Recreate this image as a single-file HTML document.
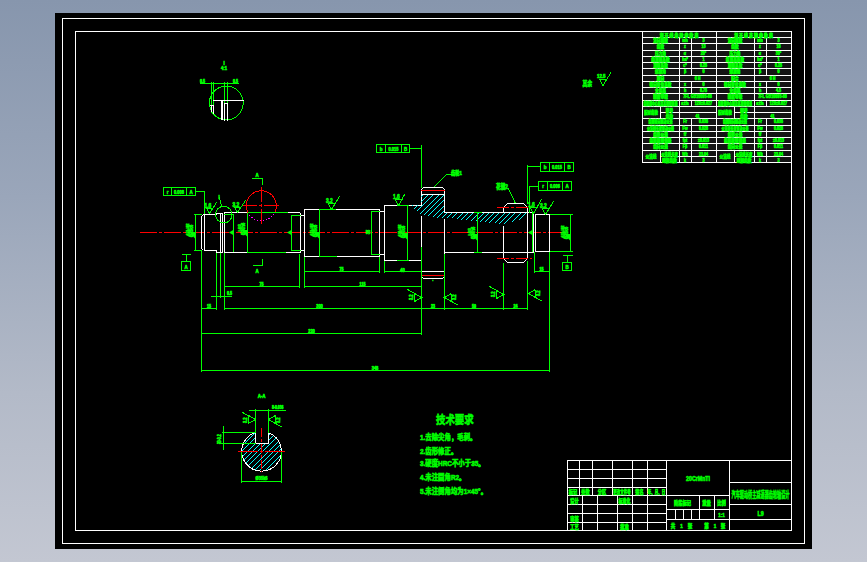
<!DOCTYPE html>
<html lang="zh"><head><meta charset="utf-8"><title>CAD 齿轮轴</title>
<style>
html,body{margin:0;padding:0}
body{width:867px;height:562px;overflow:hidden;background:linear-gradient(180deg,#8796ad 0%,#9aa6ba 35%,#b3bac8 70%,#c3c7d2 100%);}
svg{display:block;position:absolute;left:0;top:0}
svg path,svg rect,svg circle{shape-rendering:crispEdges;stroke-width:1}
svg text{font-family:"Liberation Sans","Noto Sans CJK SC",sans-serif;stroke:#00ff00;stroke-width:.6px;paint-order:stroke}
</style></head><body>
<svg width="867" height="562" viewBox="0 0 867 562" fill="none">
<rect x="55" y="13" width="757" height="536" fill="#000"/>
<rect x="62.5" y="18.5" width="742" height="525" stroke="#ffffff" fill="none"/>
<rect x="75.5" y="31.5" width="716" height="499" stroke="#ffffff" fill="none"/>
<rect x="643" y="32" width="148" height="130" fill="#141414"/>
<path d="M642 31.5H792" stroke="#ffffff"/>
<path d="M642 37.5H792" stroke="#ffffff"/>
<path d="M642 43.5H792" stroke="#ffffff"/>
<path d="M642 50.5H792" stroke="#ffffff"/>
<path d="M642 56.5H792" stroke="#ffffff"/>
<path d="M642 62.5H792" stroke="#ffffff"/>
<path d="M642 68.5H792" stroke="#ffffff"/>
<path d="M642 75.5H792" stroke="#ffffff"/>
<path d="M642 81.5H792" stroke="#ffffff"/>
<path d="M642 87.5H792" stroke="#ffffff"/>
<path d="M642 93.5H792" stroke="#ffffff"/>
<path d="M642 100.5H792" stroke="#ffffff"/>
<path d="M642 106.5H792" stroke="#ffffff"/>
<path d="M642 112.5H792" stroke="#ffffff"/>
<path d="M642 118.5H792" stroke="#ffffff"/>
<path d="M642 125.5H792" stroke="#ffffff"/>
<path d="M642 131.5H792" stroke="#ffffff"/>
<path d="M642 137.5H792" stroke="#ffffff"/>
<path d="M642 143.5H792" stroke="#ffffff"/>
<path d="M642 150.5H792" stroke="#ffffff"/>
<path d="M642 156.5H792" stroke="#ffffff"/>
<path d="M642 162.5H792" stroke="#ffffff"/>
<rect x="643" y="107" width="17" height="11" fill="#141414"/>
<rect x="643" y="151" width="17" height="11" fill="#141414"/>
<path d="M642.5 31V163" stroke="#ffffff"/>
<path d="M679.5 37V163" stroke="#ffffff"/>
<path d="M691.5 37V76" stroke="#ffffff"/>
<path d="M691.5 81V94" stroke="#ffffff"/>
<path d="M691.5 100V107" stroke="#ffffff"/>
<path d="M691.5 118V163" stroke="#ffffff"/>
<path d="M660.5 106V119" stroke="#ffffff"/>
<path d="M660.5 150V163" stroke="#ffffff"/>
<rect x="717" y="107" width="17" height="11" fill="#141414"/>
<rect x="717" y="151" width="17" height="11" fill="#141414"/>
<path d="M716.5 31V163" stroke="#ffffff"/>
<path d="M754.5 37V163" stroke="#ffffff"/>
<path d="M766.5 37V76" stroke="#ffffff"/>
<path d="M766.5 81V94" stroke="#ffffff"/>
<path d="M766.5 100V107" stroke="#ffffff"/>
<path d="M766.5 118V163" stroke="#ffffff"/>
<path d="M734.5 106V119" stroke="#ffffff"/>
<path d="M734.5 150V163" stroke="#ffffff"/>
<path d="M791.5 31V163" stroke="#ffffff"/>
<text transform="translate(679.0 36.6) scale(0.85 1)" font-size="4.6" fill="#00ff00" text-anchor="middle" font-weight="bold">渐 开 线 齿 轮 参 数 表</text>
<text transform="translate(753.5 36.6) scale(0.85 1)" font-size="4.6" fill="#00ff00" text-anchor="middle" font-weight="bold">渐 开 线 花 键 参 数 表</text>
<text transform="translate(660.5 42.1) scale(0.8 1)" font-size="4.6" fill="#00ff00" text-anchor="middle" font-weight="bold">法向模数</text>
<text transform="translate(685.0 42.1) scale(0.8 1)" font-size="4.6" fill="#00ff00" text-anchor="middle" font-weight="bold">mn</text>
<text transform="translate(703.5 42.1) scale(0.8 1)" font-size="4.6" fill="#00ff00" text-anchor="middle" font-weight="bold">3</text>
<text transform="translate(660.5 48.1) scale(0.8 1)" font-size="4.6" fill="#00ff00" text-anchor="middle" font-weight="bold">齿数</text>
<text transform="translate(685.0 48.1) scale(0.8 1)" font-size="4.6" fill="#00ff00" text-anchor="middle" font-weight="bold">z</text>
<text transform="translate(703.5 48.1) scale(0.8 1)" font-size="4.6" fill="#00ff00" text-anchor="middle" font-weight="bold">13</text>
<text transform="translate(660.5 55.1) scale(0.8 1)" font-size="4.6" fill="#00ff00" text-anchor="middle" font-weight="bold">压力角</text>
<text transform="translate(685.0 55.1) scale(0.8 1)" font-size="4.6" fill="#00ff00" text-anchor="middle" font-weight="bold">α</text>
<text transform="translate(703.5 55.1) scale(0.8 1)" font-size="4.6" fill="#00ff00" text-anchor="middle" font-weight="bold">20°</text>
<text transform="translate(660.5 61.1) scale(0.8 1)" font-size="4.6" fill="#00ff00" text-anchor="middle" font-weight="bold">齿顶高系数</text>
<text transform="translate(685.0 61.1) scale(0.8 1)" font-size="4.6" fill="#00ff00" text-anchor="middle" font-weight="bold">ha*</text>
<text transform="translate(703.5 61.1) scale(0.8 1)" font-size="4.6" fill="#00ff00" text-anchor="middle" font-weight="bold">1</text>
<text transform="translate(660.5 67.1) scale(0.8 1)" font-size="4.6" fill="#00ff00" text-anchor="middle" font-weight="bold">顶隙系数</text>
<text transform="translate(685.0 67.1) scale(0.8 1)" font-size="4.6" fill="#00ff00" text-anchor="middle" font-weight="bold">c*</text>
<text transform="translate(703.5 67.1) scale(0.8 1)" font-size="4.6" fill="#00ff00" text-anchor="middle" font-weight="bold">0.25</text>
<text transform="translate(660.5 73.1) scale(0.8 1)" font-size="4.6" fill="#00ff00" text-anchor="middle" font-weight="bold">螺旋角</text>
<text transform="translate(685.0 73.1) scale(0.8 1)" font-size="4.6" fill="#00ff00" text-anchor="middle" font-weight="bold">β</text>
<text transform="translate(703.5 73.1) scale(0.8 1)" font-size="4.6" fill="#00ff00" text-anchor="middle" font-weight="bold">0</text>
<text transform="translate(660.5 80.1) scale(0.8 1)" font-size="4.6" fill="#00ff00" text-anchor="middle" font-weight="bold">旋向</text>
<text transform="translate(697.5 80.1) scale(0.8 1)" font-size="4.6" fill="#00ff00" text-anchor="middle" font-weight="bold">6 H</text>
<text transform="translate(660.5 86.1) scale(0.8 1)" font-size="4.6" fill="#00ff00" text-anchor="middle" font-weight="bold">径向变位系数</text>
<text transform="translate(685.0 86.1) scale(0.8 1)" font-size="4.6" fill="#00ff00" text-anchor="middle" font-weight="bold">x</text>
<text transform="translate(703.5 86.1) scale(0.8 1)" font-size="4.6" fill="#00ff00" text-anchor="middle" font-weight="bold">0</text>
<text transform="translate(660.5 92.1) scale(0.8 1)" font-size="4.6" fill="#00ff00" text-anchor="middle" font-weight="bold">全齿高</text>
<text transform="translate(685.0 92.1) scale(0.8 1)" font-size="4.6" fill="#00ff00" text-anchor="middle" font-weight="bold">h</text>
<text transform="translate(703.5 92.1) scale(0.8 1)" font-size="4.6" fill="#00ff00" text-anchor="middle" font-weight="bold">6.75</text>
<text transform="translate(660.5 98.1) scale(0.8 1)" font-size="4.6" fill="#00ff00" text-anchor="middle" font-weight="bold">精度等级</text>
<text transform="translate(697.5 98.1) scale(0.8 1)" font-size="4.6" fill="#00ff00" text-anchor="middle" font-weight="bold">7FL GB10095-88</text>
<text transform="translate(660.5 105.1) scale(0.62 1)" font-size="4.6" fill="#00ff00" text-anchor="middle" font-weight="bold">齿轮副中心距及其极限偏差</text>
<text transform="translate(685.0 105.1) scale(0.8 1)" font-size="4.6" fill="#00ff00" text-anchor="middle" font-weight="bold">a±fa</text>
<text transform="translate(703.5 105.1) scale(0.8 1)" font-size="4.6" fill="#00ff00" text-anchor="middle" font-weight="bold">120±0.027</text>
<text transform="translate(735.0 42.1) scale(0.8 1)" font-size="4.6" fill="#00ff00" text-anchor="middle" font-weight="bold">法向模数</text>
<text transform="translate(760.0 42.1) scale(0.8 1)" font-size="4.6" fill="#00ff00" text-anchor="middle" font-weight="bold">mn</text>
<text transform="translate(778.5 42.1) scale(0.8 1)" font-size="4.6" fill="#00ff00" text-anchor="middle" font-weight="bold">3</text>
<text transform="translate(735.0 48.1) scale(0.8 1)" font-size="4.6" fill="#00ff00" text-anchor="middle" font-weight="bold">齿数</text>
<text transform="translate(760.0 48.1) scale(0.8 1)" font-size="4.6" fill="#00ff00" text-anchor="middle" font-weight="bold">z</text>
<text transform="translate(778.5 48.1) scale(0.8 1)" font-size="4.6" fill="#00ff00" text-anchor="middle" font-weight="bold">18</text>
<text transform="translate(735.0 55.1) scale(0.8 1)" font-size="4.6" fill="#00ff00" text-anchor="middle" font-weight="bold">压力角</text>
<text transform="translate(760.0 55.1) scale(0.8 1)" font-size="4.6" fill="#00ff00" text-anchor="middle" font-weight="bold">α</text>
<text transform="translate(778.5 55.1) scale(0.8 1)" font-size="4.6" fill="#00ff00" text-anchor="middle" font-weight="bold">30°</text>
<text transform="translate(735.0 61.1) scale(0.8 1)" font-size="4.6" fill="#00ff00" text-anchor="middle" font-weight="bold">齿顶高系数</text>
<text transform="translate(760.0 61.1) scale(0.8 1)" font-size="4.6" fill="#00ff00" text-anchor="middle" font-weight="bold">ha*</text>
<text transform="translate(778.5 61.1) scale(0.8 1)" font-size="4.6" fill="#00ff00" text-anchor="middle" font-weight="bold">1</text>
<text transform="translate(735.0 67.1) scale(0.8 1)" font-size="4.6" fill="#00ff00" text-anchor="middle" font-weight="bold">顶隙系数</text>
<text transform="translate(760.0 67.1) scale(0.8 1)" font-size="4.6" fill="#00ff00" text-anchor="middle" font-weight="bold">c*</text>
<text transform="translate(778.5 67.1) scale(0.8 1)" font-size="4.6" fill="#00ff00" text-anchor="middle" font-weight="bold">0.25</text>
<text transform="translate(735.0 73.1) scale(0.8 1)" font-size="4.6" fill="#00ff00" text-anchor="middle" font-weight="bold">螺旋角</text>
<text transform="translate(760.0 73.1) scale(0.8 1)" font-size="4.6" fill="#00ff00" text-anchor="middle" font-weight="bold">β</text>
<text transform="translate(778.5 73.1) scale(0.8 1)" font-size="4.6" fill="#00ff00" text-anchor="middle" font-weight="bold">0</text>
<text transform="translate(735.0 80.1) scale(0.8 1)" font-size="4.6" fill="#00ff00" text-anchor="middle" font-weight="bold">配合</text>
<text transform="translate(772.5 80.1) scale(0.8 1)" font-size="4.6" fill="#00ff00" text-anchor="middle" font-weight="bold">6 H</text>
<text transform="translate(735.0 86.1) scale(0.8 1)" font-size="4.6" fill="#00ff00" text-anchor="middle" font-weight="bold">径向变位系数</text>
<text transform="translate(760.0 86.1) scale(0.8 1)" font-size="4.6" fill="#00ff00" text-anchor="middle" font-weight="bold">x</text>
<text transform="translate(778.5 86.1) scale(0.8 1)" font-size="4.6" fill="#00ff00" text-anchor="middle" font-weight="bold">0</text>
<text transform="translate(735.0 92.1) scale(0.8 1)" font-size="4.6" fill="#00ff00" text-anchor="middle" font-weight="bold">全齿高</text>
<text transform="translate(760.0 92.1) scale(0.8 1)" font-size="4.6" fill="#00ff00" text-anchor="middle" font-weight="bold">h</text>
<text transform="translate(778.5 92.1) scale(0.8 1)" font-size="4.6" fill="#00ff00" text-anchor="middle" font-weight="bold">4.5</text>
<text transform="translate(735.0 98.1) scale(0.8 1)" font-size="4.6" fill="#00ff00" text-anchor="middle" font-weight="bold">精度等级</text>
<text transform="translate(772.5 98.1) scale(0.8 1)" font-size="4.6" fill="#00ff00" text-anchor="middle" font-weight="bold">7FL GB10095-88</text>
<text transform="translate(735.0 105.1) scale(0.62 1)" font-size="4.6" fill="#00ff00" text-anchor="middle" font-weight="bold">齿轮副中心距及其极限偏差</text>
<text transform="translate(760.0 105.1) scale(0.8 1)" font-size="4.6" fill="#00ff00" text-anchor="middle" font-weight="bold">a±fa</text>
<text transform="translate(778.5 105.1) scale(0.8 1)" font-size="4.6" fill="#00ff00" text-anchor="middle" font-weight="bold">120±0.027</text>
<text transform="translate(651.0 114.2) scale(0.75 1)" font-size="4.6" fill="#00ff00" text-anchor="middle" font-weight="bold">配对齿轮</text>
<text transform="translate(669.5 111.6) scale(0.8 1)" font-size="4.6" fill="#00ff00" text-anchor="middle" font-weight="bold">图号</text>
<text transform="translate(669.5 117.6) scale(0.8 1)" font-size="4.6" fill="#00ff00" text-anchor="middle" font-weight="bold">齿数</text>
<text transform="translate(697.5 117.6) scale(0.8 1)" font-size="4.6" fill="#00ff00" text-anchor="middle" font-weight="bold">41</text>
<text transform="translate(660.5 123.1) scale(0.66 1)" font-size="4.6" fill="#00ff00" text-anchor="middle" font-weight="bold">齿圈径向跳动公差</text>
<text transform="translate(685.0 123.1) scale(0.8 1)" font-size="4.6" fill="#00ff00" text-anchor="middle" font-weight="bold">Fr</text>
<text transform="translate(703.5 123.1) scale(0.8 1)" font-size="4.6" fill="#00ff00" text-anchor="middle" font-weight="bold">0.036</text>
<text transform="translate(660.5 130.1) scale(0.66 1)" font-size="4.6" fill="#00ff00" text-anchor="middle" font-weight="bold">公法线长度变动公差</text>
<text transform="translate(685.0 130.1) scale(0.8 1)" font-size="4.6" fill="#00ff00" text-anchor="middle" font-weight="bold">Fw</text>
<text transform="translate(703.5 130.1) scale(0.8 1)" font-size="4.6" fill="#00ff00" text-anchor="middle" font-weight="bold">0.028</text>
<text transform="translate(660.5 136.1) scale(0.8 1)" font-size="4.6" fill="#00ff00" text-anchor="middle" font-weight="bold">齿形公差</text>
<text transform="translate(685.0 136.1) scale(0.8 1)" font-size="4.6" fill="#00ff00" text-anchor="middle" font-weight="bold">ff</text>
<text transform="translate(703.5 136.1) scale(0.8 1)" font-size="4.6" fill="#00ff00" text-anchor="middle" font-weight="bold"></text>
<text transform="translate(660.5 142.1) scale(0.8 1)" font-size="4.6" fill="#00ff00" text-anchor="middle" font-weight="bold">齿距极限偏差</text>
<text transform="translate(685.0 142.1) scale(0.8 1)" font-size="4.6" fill="#00ff00" text-anchor="middle" font-weight="bold">fpt</text>
<text transform="translate(703.5 142.1) scale(0.8 1)" font-size="4.6" fill="#00ff00" text-anchor="middle" font-weight="bold">±0.013</text>
<text transform="translate(660.5 148.1) scale(0.8 1)" font-size="4.6" fill="#00ff00" text-anchor="middle" font-weight="bold">齿向公差</text>
<text transform="translate(685.0 148.1) scale(0.8 1)" font-size="4.6" fill="#00ff00" text-anchor="middle" font-weight="bold">Fβ</text>
<text transform="translate(703.5 148.1) scale(0.8 1)" font-size="4.6" fill="#00ff00" text-anchor="middle" font-weight="bold">0.011</text>
<text transform="translate(651.0 158.2) scale(0.8 1)" font-size="4.6" fill="#00ff00" text-anchor="middle" font-weight="bold">公法线</text>
<text transform="translate(669.5 155.6) scale(0.72 1)" font-size="4.6" fill="#00ff00" text-anchor="middle" font-weight="bold">公法线长度</text>
<text transform="translate(669.5 161.6) scale(0.8 1)" font-size="4.6" fill="#00ff00" text-anchor="middle" font-weight="bold">跨测齿数</text>
<text transform="translate(685.0 155.6) scale(0.8 1)" font-size="4.6" fill="#00ff00" text-anchor="middle" font-weight="bold">Wk</text>
<text transform="translate(685.0 161.6) scale(0.8 1)" font-size="4.6" fill="#00ff00" text-anchor="middle" font-weight="bold">k</text>
<text transform="translate(703.5 155.6) scale(0.8 1)" font-size="4.6" fill="#00ff00" text-anchor="middle" font-weight="bold">23.04</text>
<text transform="translate(703.5 161.6) scale(0.8 1)" font-size="4.6" fill="#00ff00" text-anchor="middle" font-weight="bold">3</text>
<text transform="translate(725.0 114.2) scale(0.75 1)" font-size="4.6" fill="#00ff00" text-anchor="middle" font-weight="bold">配对齿轮</text>
<text transform="translate(744.0 111.6) scale(0.8 1)" font-size="4.6" fill="#00ff00" text-anchor="middle" font-weight="bold">图号</text>
<text transform="translate(744.0 117.6) scale(0.8 1)" font-size="4.6" fill="#00ff00" text-anchor="middle" font-weight="bold">齿数</text>
<text transform="translate(772.5 117.6) scale(0.8 1)" font-size="4.6" fill="#00ff00" text-anchor="middle" font-weight="bold">41</text>
<text transform="translate(735.0 123.1) scale(0.66 1)" font-size="4.6" fill="#00ff00" text-anchor="middle" font-weight="bold">齿圈径向跳动公差</text>
<text transform="translate(760.0 123.1) scale(0.8 1)" font-size="4.6" fill="#00ff00" text-anchor="middle" font-weight="bold">Fr</text>
<text transform="translate(778.5 123.1) scale(0.8 1)" font-size="4.6" fill="#00ff00" text-anchor="middle" font-weight="bold">0.036</text>
<text transform="translate(735.0 130.1) scale(0.66 1)" font-size="4.6" fill="#00ff00" text-anchor="middle" font-weight="bold">公法线长度变动公差</text>
<text transform="translate(760.0 130.1) scale(0.8 1)" font-size="4.6" fill="#00ff00" text-anchor="middle" font-weight="bold">Fw</text>
<text transform="translate(778.5 130.1) scale(0.8 1)" font-size="4.6" fill="#00ff00" text-anchor="middle" font-weight="bold">0.028</text>
<text transform="translate(735.0 136.1) scale(0.8 1)" font-size="4.6" fill="#00ff00" text-anchor="middle" font-weight="bold">齿形公差</text>
<text transform="translate(760.0 136.1) scale(0.8 1)" font-size="4.6" fill="#00ff00" text-anchor="middle" font-weight="bold">ff</text>
<text transform="translate(778.5 136.1) scale(0.8 1)" font-size="4.6" fill="#00ff00" text-anchor="middle" font-weight="bold"></text>
<text transform="translate(735.0 142.1) scale(0.8 1)" font-size="4.6" fill="#00ff00" text-anchor="middle" font-weight="bold">齿距极限偏差</text>
<text transform="translate(760.0 142.1) scale(0.8 1)" font-size="4.6" fill="#00ff00" text-anchor="middle" font-weight="bold">fpt</text>
<text transform="translate(778.5 142.1) scale(0.8 1)" font-size="4.6" fill="#00ff00" text-anchor="middle" font-weight="bold">±0.013</text>
<text transform="translate(735.0 148.1) scale(0.8 1)" font-size="4.6" fill="#00ff00" text-anchor="middle" font-weight="bold">齿向公差</text>
<text transform="translate(760.0 148.1) scale(0.8 1)" font-size="4.6" fill="#00ff00" text-anchor="middle" font-weight="bold">Fβ</text>
<text transform="translate(778.5 148.1) scale(0.8 1)" font-size="4.6" fill="#00ff00" text-anchor="middle" font-weight="bold">0.011</text>
<text transform="translate(725.0 158.2) scale(0.8 1)" font-size="4.6" fill="#00ff00" text-anchor="middle" font-weight="bold">公法线</text>
<text transform="translate(744.0 155.6) scale(0.72 1)" font-size="4.6" fill="#00ff00" text-anchor="middle" font-weight="bold">公法线长度</text>
<text transform="translate(744.0 161.6) scale(0.8 1)" font-size="4.6" fill="#00ff00" text-anchor="middle" font-weight="bold">跨测齿数</text>
<text transform="translate(760.0 155.6) scale(0.8 1)" font-size="4.6" fill="#00ff00" text-anchor="middle" font-weight="bold">Wk</text>
<text transform="translate(760.0 161.6) scale(0.8 1)" font-size="4.6" fill="#00ff00" text-anchor="middle" font-weight="bold">k</text>
<text transform="translate(778.5 155.6) scale(0.8 1)" font-size="4.6" fill="#00ff00" text-anchor="middle" font-weight="bold">23.04</text>
<text transform="translate(778.5 161.6) scale(0.8 1)" font-size="4.6" fill="#00ff00" text-anchor="middle" font-weight="bold">3</text>
<path d="M140 232.5H567" stroke="#ff0000" stroke-dasharray="17 2 3 2"/>
<path d="M203.5 214.5L216.5 214.5" stroke="#ffffff" fill="none"/>
<path d="M203.5 250.5L216.5 250.5" stroke="#ffffff" fill="none"/>
<path d="M203.5 214.5L201.5 216.5L201.5 248.5L203.5 250.5" stroke="#ffffff" fill="none"/>
<path d="M204.5 214V251" stroke="#ffffff"/>
<path d="M216.5 214.5L216.5 213.5L222.5 213.5L222.5 252.5L216.5 252.5L216.5 250.5" stroke="#ffffff" fill="none"/>
<path d="M220.5 213V253" stroke="#ffffff"/>
<path d="M224.5 252.5L224.5 212.5L299.5 212.5L300.5 213.5L300.5 252.5L224.5 252.5" stroke="#ffffff" fill="none"/>
<path d="M300 215.5H305" stroke="#ffffff"/>
<path d="M300 250.5H305" stroke="#ffffff"/>
<path d="M304.5 209.5L379.5 209.5L379.5 256.5L304.5 256.5Z" stroke="#ffffff" fill="none"/>
<path d="M379 211.5H385" stroke="#ffffff"/>
<path d="M379 254.5H385" stroke="#ffffff"/>
<path d="M421.5 205.5L384.5 205.5L384.5 260.5L421.5 260.5" stroke="#ffffff" fill="none"/>
<path d="M421.5 205.5L421.5 189.5L423.5 187.5L442.5 187.5L444.5 189.5L444.5 212.5" stroke="#ffffff" fill="none"/>
<path d="M421.5 215.5L421.5 276.5L423.5 278.5L442.5 278.5L444.5 276.5L444.5 218.5" stroke="#ffffff" fill="none"/>
<path d="M421 194.5H445" stroke="#ffffff"/>
<path d="M421 271.5H445" stroke="#ffffff"/>
<path d="M421 190.5H445" stroke="#ff0000"/>
<path d="M421 275.5H445" stroke="#ff0000"/>
<path d="M444 212.5H504" stroke="#ffffff"/>
<path d="M444 252.5H504" stroke="#ffffff"/>
<path d="M503.5 212.5L503.5 207.5L507.5 203.5L523.5 203.5L527.5 207.5L527.5 212.5" stroke="#ffffff" fill="none"/>
<path d="M503.5 225.5L503.5 258.5L507.5 262.5L523.5 262.5L527.5 258.5L527.5 253.5" stroke="#ffffff" fill="none"/>
<path d="M503 212.5H528" stroke="#ffffff"/>
<path d="M503 252.5H528" stroke="#ffffff"/>
<path d="M527.5 212V254" stroke="#ffffff"/>
<path d="M497 207.5H532" stroke="#ff0000" stroke-dasharray="12 2 3 2"/>
<path d="M497 258.5H532" stroke="#ff0000" stroke-dasharray="12 2 3 2"/>
<path d="M527 212.5H534" stroke="#ffffff"/>
<path d="M527 252.5H534" stroke="#ffffff"/>
<path d="M533.5 212V253" stroke="#ffffff"/>
<path d="M535.5 214.5L549.5 214.5L549.5 251.5L535.5 251.5Z" stroke="#ffffff" fill="none"/>
<path d="M422 195h1v1h-1zM427 195h1v1h-1zM432 195h1v1h-1zM438 195h1v1h-1zM443 195h1v1h-1zM421 196h1v1h-1zM426 196h1v1h-1zM431 196h1v1h-1zM437 196h1v1h-1zM442 196h1v1h-1zM425 197h1v1h-1zM430 197h1v1h-1zM436 197h1v1h-1zM441 197h1v1h-1zM424 198h1v1h-1zM429 198h1v1h-1zM435 198h1v1h-1zM440 198h1v1h-1zM423 199h1v1h-1zM428 199h1v1h-1zM434 199h1v1h-1zM439 199h1v1h-1zM422 200h1v1h-1zM427 200h1v1h-1zM433 200h1v1h-1zM438 200h1v1h-1zM443 200h1v1h-1zM421 201h1v1h-1zM426 201h1v1h-1zM432 201h1v1h-1zM437 201h1v1h-1zM442 201h1v1h-1zM425 202h1v1h-1zM431 202h1v1h-1zM436 202h1v1h-1zM441 202h1v1h-1zM424 203h1v1h-1zM430 203h1v1h-1zM435 203h1v1h-1zM440 203h1v1h-1zM423 204h1v1h-1zM429 204h1v1h-1zM434 204h1v1h-1zM439 204h1v1h-1zM412 205h1v1h-1zM417 205h1v1h-1zM422 205h1v1h-1zM428 205h1v1h-1zM433 205h1v1h-1zM438 205h1v1h-1zM416 206h1v1h-1zM421 206h1v1h-1zM427 206h1v1h-1zM432 206h1v1h-1zM437 206h1v1h-1zM443 206h1v1h-1zM415 207h1v1h-1zM420 207h1v1h-1zM426 207h1v1h-1zM431 207h1v1h-1zM436 207h1v1h-1zM442 207h1v1h-1zM414 208h1v1h-1zM419 208h1v1h-1zM425 208h1v1h-1zM430 208h1v1h-1zM435 208h1v1h-1zM441 208h1v1h-1zM418 209h1v1h-1zM424 209h1v1h-1zM429 209h1v1h-1zM434 209h1v1h-1zM440 209h1v1h-1zM417 210h1v1h-1zM423 210h1v1h-1zM428 210h1v1h-1zM433 210h1v1h-1zM439 210h1v1h-1zM422 211h1v1h-1zM427 211h1v1h-1zM432 211h1v1h-1zM438 211h1v1h-1zM443 211h1v1h-1zM421 212h1v1h-1zM426 212h1v1h-1zM431 212h1v1h-1zM437 212h1v1h-1zM442 212h1v1h-1zM420 213h1v1h-1zM425 213h1v1h-1zM430 213h1v1h-1zM436 213h1v1h-1zM441 213h1v1h-1zM446 213h1v1h-1zM451 213h1v1h-1zM456 213h1v1h-1zM462 213h1v1h-1zM467 213h1v1h-1zM472 213h1v1h-1zM478 213h1v1h-1zM483 213h1v1h-1zM488 213h1v1h-1zM493 213h1v1h-1zM498 213h1v1h-1zM504 213h1v1h-1zM509 213h1v1h-1zM514 213h1v1h-1zM520 213h1v1h-1zM525 213h1v1h-1zM424 214h1v1h-1zM429 214h1v1h-1zM435 214h1v1h-1zM440 214h1v1h-1zM445 214h1v1h-1zM450 214h1v1h-1zM455 214h1v1h-1zM461 214h1v1h-1zM466 214h1v1h-1zM471 214h1v1h-1zM477 214h1v1h-1zM482 214h1v1h-1zM487 214h1v1h-1zM492 214h1v1h-1zM497 214h1v1h-1zM503 214h1v1h-1zM508 214h1v1h-1zM513 214h1v1h-1zM519 214h1v1h-1zM524 214h1v1h-1zM428 215h1v1h-1zM434 215h1v1h-1zM439 215h1v1h-1zM444 215h1v1h-1zM449 215h1v1h-1zM454 215h1v1h-1zM460 215h1v1h-1zM465 215h1v1h-1zM470 215h1v1h-1zM476 215h1v1h-1zM481 215h1v1h-1zM486 215h1v1h-1zM491 215h1v1h-1zM496 215h1v1h-1zM502 215h1v1h-1zM507 215h1v1h-1zM512 215h1v1h-1zM518 215h1v1h-1zM523 215h1v1h-1zM433 216h1v1h-1zM438 216h1v1h-1zM443 216h1v1h-1zM448 216h1v1h-1zM453 216h1v1h-1zM459 216h1v1h-1zM464 216h1v1h-1zM469 216h1v1h-1zM475 216h1v1h-1zM480 216h1v1h-1zM485 216h1v1h-1zM490 216h1v1h-1zM495 216h1v1h-1zM501 216h1v1h-1zM506 216h1v1h-1zM511 216h1v1h-1zM517 216h1v1h-1zM522 216h1v1h-1zM437 217h1v1h-1zM442 217h1v1h-1zM447 217h1v1h-1zM452 217h1v1h-1zM458 217h1v1h-1zM463 217h1v1h-1zM468 217h1v1h-1zM474 217h1v1h-1zM479 217h1v1h-1zM484 217h1v1h-1zM489 217h1v1h-1zM494 217h1v1h-1zM500 217h1v1h-1zM505 217h1v1h-1zM510 217h1v1h-1zM516 217h1v1h-1zM521 217h1v1h-1zM457 218h1v1h-1zM462 218h1v1h-1zM467 218h1v1h-1zM473 218h1v1h-1zM478 218h1v1h-1zM483 218h1v1h-1zM488 218h1v1h-1zM493 218h1v1h-1zM499 218h1v1h-1zM504 218h1v1h-1zM509 218h1v1h-1zM515 218h1v1h-1zM520 218h1v1h-1zM461 219h1v1h-1zM466 219h1v1h-1zM472 219h1v1h-1zM477 219h1v1h-1zM482 219h1v1h-1zM487 219h1v1h-1zM492 219h1v1h-1zM498 219h1v1h-1zM503 219h1v1h-1zM508 219h1v1h-1zM514 219h1v1h-1zM519 219h1v1h-1zM471 220h1v1h-1zM476 220h1v1h-1zM481 220h1v1h-1zM486 220h1v1h-1zM491 220h1v1h-1zM497 220h1v1h-1zM502 220h1v1h-1zM507 220h1v1h-1zM513 220h1v1h-1zM480 221h1v1h-1zM485 221h1v1h-1zM490 221h1v1h-1zM496 221h1v1h-1zM501 221h1v1h-1zM506 221h1v1h-1zM512 221h1v1h-1zM489 222h1v1h-1zM495 222h1v1h-1zM500 222h1v1h-1zM505 222h1v1h-1zM499 223h1v1h-1zM504 223h1v1h-1z" fill="#00ffff" stroke="none"/>
<rect x="163.5" y="187.5" width="32" height="8" stroke="#00ff00" fill="none"/>
<path d="M171.5 187V196" stroke="#00ff00"/>
<path d="M186.5 187V196" stroke="#00ff00"/>
<path d="M195 191.5H205" stroke="#00ff00"/>
<path d="M204.5 191V214" stroke="#00ff00"/>
<path d="M195.5 214V251" stroke="#00ff00"/>
<path d="M194 214.5H202" stroke="#00ff00"/>
<path d="M194 250.5H202" stroke="#00ff00"/>
<rect x="181.5" y="261.5" width="9" height="9" stroke="#00ff00" fill="none"/>
<path d="M186.5 254V262" stroke="#00ff00"/>
<path d="M182 254.5H191" stroke="#00ff00"/>
<circle cx="223.8" cy="214.6" r="8.3" stroke="#00ff00" fill="none"/>
<path d="M221.5 206.5L219.5 197.5" stroke="#00ff00"/>
<path d="M233.5 214V252" stroke="#00ff00"/>
<path d="M224 214.5H234" stroke="#00ff00"/>
<path d="M247.5 212V253" stroke="#00ff00"/>
<path d="M247 212.5H288" stroke="#00ff00"/>
<path d="M247 252.5H286" stroke="#00ff00"/>
<path d="M291.5 215V251" stroke="#00ff00"/>
<path d="M291 215.5H301" stroke="#00ff00"/>
<path d="M291 250.5H301" stroke="#00ff00"/>
<path d="M319.5 209V257" stroke="#00ff00"/>
<path d="M319 209.5H336" stroke="#00ff00"/>
<path d="M319 256.5H337" stroke="#00ff00"/>
<path d="M371.5 211V255" stroke="#00ff00"/>
<path d="M371 211.5H380" stroke="#00ff00"/>
<path d="M371 254.5H380" stroke="#00ff00"/>
<path d="M407.5 205V261" stroke="#00ff00"/>
<path d="M397 205.5H409" stroke="#00ff00"/>
<path d="M397 260.5H409" stroke="#00ff00"/>
<rect x="376.5" y="144.5" width="33" height="8" stroke="#00ff00" fill="none"/>
<path d="M385.5 144V153" stroke="#00ff00"/>
<path d="M401.5 144V153" stroke="#00ff00"/>
<path d="M409 148.5H422" stroke="#00ff00"/>
<path d="M421.5 145V188" stroke="#00ff00"/>
<path d="M433.5 187.5L446.5 174.5" stroke="#00ff00"/>
<path d="M446 174.5H452" stroke="#00ff00"/>
<path d="M477.5 212V253" stroke="#00ff00"/>
<path d="M474 212.5H482" stroke="#00ff00"/>
<path d="M474 252.5H482" stroke="#00ff00"/>
<path d="M508.5 188.5L515.5 203.5" stroke="#00ff00"/>
<rect x="540.5" y="162.5" width="33" height="9" stroke="#00ff00" fill="none"/>
<path d="M549.5 162V172" stroke="#00ff00"/>
<path d="M564.5 162V172" stroke="#00ff00"/>
<path d="M527 166.5H541" stroke="#00ff00"/>
<path d="M527.5 165V204" stroke="#00ff00"/>
<rect x="538.5" y="181.5" width="33" height="9" stroke="#00ff00" fill="none"/>
<path d="M547.5 181V191" stroke="#00ff00"/>
<path d="M562.5 181V191" stroke="#00ff00"/>
<path d="M529 186.5H539" stroke="#00ff00"/>
<path d="M529.5 186V213" stroke="#00ff00"/>
<path d="M532.5 213V252" stroke="#00ff00"/>
<path d="M570.5 214V252" stroke="#00ff00"/>
<path d="M550 214.5H573" stroke="#00ff00"/>
<path d="M550 251.5H573" stroke="#00ff00"/>
<rect x="562.5" y="262.5" width="9" height="8" stroke="#00ff00" fill="none"/>
<path d="M567.5 255V263" stroke="#00ff00"/>
<path d="M563 255.5H573" stroke="#00ff00"/>
<path d="M201.5 251V372" stroke="#00ff00"/>
<path d="M216.5 253V310" stroke="#00ff00"/>
<path d="M220.5 253V298" stroke="#00ff00"/>
<path d="M224.5 253V310" stroke="#00ff00"/>
<path d="M299.5 254V288" stroke="#00ff00"/>
<path d="M304.5 257V288" stroke="#00ff00"/>
<path d="M379.5 257V273" stroke="#00ff00"/>
<path d="M384.5 261V273" stroke="#00ff00"/>
<path d="M421.5 247V335" stroke="#00ff00"/>
<path d="M444.5 254V310" stroke="#00ff00"/>
<path d="M503.5 263V310" stroke="#00ff00"/>
<path d="M527.5 261V310" stroke="#00ff00"/>
<path d="M534.5 252V273" stroke="#00ff00"/>
<path d="M549.5 252V372" stroke="#00ff00"/>
<path d="M304 271.5H380" stroke="#00ff00"/>
<path d="M384 271.5H422" stroke="#00ff00"/>
<path d="M224 286.5H300" stroke="#00ff00"/>
<path d="M304 286.5H422" stroke="#00ff00"/>
<path d="M211 296.5H232" stroke="#00ff00"/>
<path d="M201 308.5H217" stroke="#00ff00"/>
<path d="M224 308.5H528" stroke="#00ff00"/>
<path d="M201 333.5H422" stroke="#00ff00"/>
<path d="M201 370.5H550" stroke="#00ff00"/>
<path d="M534 271.5H550" stroke="#00ff00"/>
<path d="M252 178.5H263" stroke="#00ff00"/>
<path d="M262.5 178V185" stroke="#00ff00"/>
<path d="M262.5 259V266" stroke="#00ff00"/>
<path d="M253 265.5H263" stroke="#00ff00"/>
<path d="M247.9 212.5A15 15 0 1 1 274.7 212.5" stroke="#ff0000" fill="none" style="shape-rendering:crispEdges"/>
<path d="M247.9 212.5A15 15 0 0 0 274.7 212.5" stroke="#ff00ff" fill="none" stroke-dasharray="1 2"/>
<path d="M242 205.5H280" stroke="#ff0000" stroke-dasharray="15 2 3 2"/>
<path d="M261.5 187V225" stroke="#ff0000" stroke-dasharray="15 2 3 2"/>
<path d="M206.5 208.5L212.5 208.5L209.5 213.5L206.5 208.5" stroke="#00ff00" fill="none"/>
<path d="M209.5 213.5L216.5 202.5" stroke="#00ff00"/>
<text transform="translate(204.5 207.5) scale(0.75 1)" font-size="6.5" fill="#00ff00" text-anchor="start" font-weight="bold">1.6</text>
<path d="M234.5 207.5L240.5 207.5L237.5 212.5L234.5 207.5" stroke="#00ff00" fill="none"/>
<path d="M237.5 212.5L245.5 200.5" stroke="#00ff00"/>
<text transform="translate(232.5 206.5) scale(0.75 1)" font-size="6.5" fill="#00ff00" text-anchor="start" font-weight="bold">3.2</text>
<path d="M328.0 203.5L335.0 203.5L331.5 209.5L328.0 203.5" stroke="#00ff00" fill="none"/>
<path d="M331.5 209.5L339.5 196.5" stroke="#00ff00"/>
<text transform="translate(326.0 202.5) scale(0.75 1)" font-size="6.5" fill="#00ff00" text-anchor="start" font-weight="bold">3.2</text>
<path d="M395.0 199.5L402.0 199.5L398.5 205.5L395.0 199.5" stroke="#00ff00" fill="none"/>
<path d="M398.5 205.5L404.5 194.5" stroke="#00ff00"/>
<text transform="translate(393.0 198.5) scale(0.75 1)" font-size="6.5" fill="#00ff00" text-anchor="start" font-weight="bold">1.6</text>
<path d="M530.0 207.5L537.0 207.5L533.5 213.5L530.0 207.5" stroke="#00ff00" fill="none"/>
<path d="M533.5 213.5L541.5 199.5" stroke="#00ff00"/>
<text transform="translate(528.0 206.5) scale(0.75 1)" font-size="6.5" fill="#00ff00" text-anchor="start" font-weight="bold">1.6</text>
<path d="M542.0 208.5L549.0 208.5L545.5 214.5L542.0 208.5" stroke="#00ff00" fill="none"/>
<path d="M545.5 214.5L553.5 201.5" stroke="#00ff00"/>
<text transform="translate(540.0 207.5) scale(0.75 1)" font-size="6.5" fill="#00ff00" text-anchor="start" font-weight="bold">3.2</text>
<path d="M414.5 293.5L414.5 301.5L421.5 297.5L414.5 293.5" stroke="#00ff00" fill="none"/>
<path d="M421.5 297.5L407.5 289.5" stroke="#00ff00"/>
<text transform="translate(413 300) rotate(-90) scale(0.8 1)" font-size="5" fill="#00ff00" text-anchor="start" font-weight="bold">3.2</text>
<path d="M451.5 293.5L451.5 301.5L444.5 297.5L451.5 293.5" stroke="#00ff00" fill="none"/>
<path d="M444.5 297.5L458.5 305.5" stroke="#00ff00"/>
<text transform="translate(456 300) rotate(-90) scale(0.8 1)" font-size="5" fill="#00ff00" text-anchor="start" font-weight="bold">3.2</text>
<path d="M496.5 290.5L496.5 298.5L503.5 294.5L496.5 290.5" stroke="#00ff00" fill="none"/>
<path d="M503.5 294.5L489.5 286.5" stroke="#00ff00"/>
<text transform="translate(495 297) rotate(-90) scale(0.8 1)" font-size="5" fill="#00ff00" text-anchor="start" font-weight="bold">3.2</text>
<path d="M535.5 289.5L535.5 297.5L528.5 293.5L535.5 289.5" stroke="#00ff00" fill="none"/>
<path d="M528.5 293.5L542.5 301.5" stroke="#00ff00"/>
<text transform="translate(540 296) rotate(-90) scale(0.8 1)" font-size="5" fill="#00ff00" text-anchor="start" font-weight="bold">3.2</text>
<circle cx="226.3" cy="103" r="16.9" stroke="#00ff00" fill="none"/>
<path d="M200 83.5H239" stroke="#00ff00"/>
<path d="M211.5 82V113" stroke="#00ff00"/>
<path d="M213.5 82V113" stroke="#00ff00"/>
<path d="M224.5 82V104" stroke="#00ff00"/>
<path d="M227.5 82V104" stroke="#00ff00"/>
<path d="M213 100.5H244" stroke="#ffffff"/>
<path d="M221.5 100V120" stroke="#ffffff"/>
<path d="M222.5 100V120" stroke="#ffffff"/>
<path d="M224.5 103V121" stroke="#ffffff"/>
<path d="M227.5 103V121" stroke="#ffffff"/>
<path d="M224 103.5H228" stroke="#ffffff"/>
<path d="M209.5 105.5L213.5 105.5L213.5 113.5" stroke="#ffffff" fill="none"/>
<path d="M211.5 106V112" stroke="#ffffff"/>
<text transform="translate(224 64.5) scale(0.8 1)" font-size="5" fill="#00ff00" text-anchor="middle" font-weight="bold">I</text>
<text transform="translate(224 70) scale(0.8 1)" font-size="5" fill="#00ff00" text-anchor="middle" font-weight="bold">4:1</text>
<text transform="translate(200 83) scale(0.8 1)" font-size="4.5" fill="#00ff00" text-anchor="start" font-weight="bold">0.5</text>
<text transform="translate(233 83) scale(0.8 1)" font-size="4.5" fill="#00ff00" text-anchor="start" font-weight="bold">0.5</text>
<path d="M254 433h1v1h-1zM253 434h1v1h-1zM269 434h1v1h-1zM252 435h1v1h-1zM251 436h1v1h-1zM272 436h1v1h-1zM250 437h1v1h-1zM271 437h1v1h-1zM249 438h1v1h-1zM254 438h1v1h-1zM270 438h1v1h-1zM275 438h1v1h-1zM248 439h1v1h-1zM253 439h1v1h-1zM269 439h1v1h-1zM274 439h1v1h-1zM247 440h1v1h-1zM252 440h1v1h-1zM273 440h1v1h-1zM246 441h1v1h-1zM251 441h1v1h-1zM272 441h1v1h-1zM245 442h1v1h-1zM250 442h1v1h-1zM271 442h1v1h-1zM277 442h1v1h-1zM244 443h1v1h-1zM249 443h1v1h-1zM270 443h1v1h-1zM276 443h1v1h-1zM248 444h1v1h-1zM254 444h1v1h-1zM259 444h1v1h-1zM264 444h1v1h-1zM269 444h1v1h-1zM275 444h1v1h-1zM247 445h1v1h-1zM253 445h1v1h-1zM258 445h1v1h-1zM263 445h1v1h-1zM268 445h1v1h-1zM274 445h1v1h-1zM279 445h1v1h-1zM246 446h1v1h-1zM252 446h1v1h-1zM257 446h1v1h-1zM262 446h1v1h-1zM267 446h1v1h-1zM273 446h1v1h-1zM278 446h1v1h-1zM245 447h1v1h-1zM251 447h1v1h-1zM256 447h1v1h-1zM261 447h1v1h-1zM266 447h1v1h-1zM272 447h1v1h-1zM277 447h1v1h-1zM244 448h1v1h-1zM250 448h1v1h-1zM255 448h1v1h-1zM260 448h1v1h-1zM265 448h1v1h-1zM271 448h1v1h-1zM276 448h1v1h-1zM243 449h1v1h-1zM249 449h1v1h-1zM254 449h1v1h-1zM259 449h1v1h-1zM264 449h1v1h-1zM270 449h1v1h-1zM275 449h1v1h-1zM280 449h1v1h-1zM242 450h1v1h-1zM248 450h1v1h-1zM253 450h1v1h-1zM258 450h1v1h-1zM263 450h1v1h-1zM269 450h1v1h-1zM274 450h1v1h-1zM279 450h1v1h-1zM247 451h1v1h-1zM252 451h1v1h-1zM257 451h1v1h-1zM262 451h1v1h-1zM268 451h1v1h-1zM273 451h1v1h-1zM278 451h1v1h-1zM246 452h1v1h-1zM251 452h1v1h-1zM256 452h1v1h-1zM261 452h1v1h-1zM267 452h1v1h-1zM272 452h1v1h-1zM277 452h1v1h-1zM245 453h1v1h-1zM250 453h1v1h-1zM255 453h1v1h-1zM260 453h1v1h-1zM266 453h1v1h-1zM271 453h1v1h-1zM276 453h1v1h-1zM244 454h1v1h-1zM249 454h1v1h-1zM254 454h1v1h-1zM259 454h1v1h-1zM265 454h1v1h-1zM270 454h1v1h-1zM275 454h1v1h-1zM243 455h1v1h-1zM248 455h1v1h-1zM253 455h1v1h-1zM258 455h1v1h-1zM264 455h1v1h-1zM269 455h1v1h-1zM274 455h1v1h-1zM247 456h1v1h-1zM252 456h1v1h-1zM257 456h1v1h-1zM263 456h1v1h-1zM268 456h1v1h-1zM273 456h1v1h-1zM279 456h1v1h-1zM246 457h1v1h-1zM251 457h1v1h-1zM256 457h1v1h-1zM262 457h1v1h-1zM267 457h1v1h-1zM272 457h1v1h-1zM278 457h1v1h-1zM245 458h1v1h-1zM250 458h1v1h-1zM255 458h1v1h-1zM261 458h1v1h-1zM266 458h1v1h-1zM271 458h1v1h-1zM277 458h1v1h-1zM244 459h1v1h-1zM249 459h1v1h-1zM254 459h1v1h-1zM260 459h1v1h-1zM265 459h1v1h-1zM270 459h1v1h-1zM276 459h1v1h-1zM248 460h1v1h-1zM253 460h1v1h-1zM259 460h1v1h-1zM264 460h1v1h-1zM269 460h1v1h-1zM275 460h1v1h-1zM247 461h1v1h-1zM252 461h1v1h-1zM258 461h1v1h-1zM263 461h1v1h-1zM268 461h1v1h-1zM274 461h1v1h-1zM246 462h1v1h-1zM251 462h1v1h-1zM257 462h1v1h-1zM262 462h1v1h-1zM267 462h1v1h-1zM273 462h1v1h-1zM250 463h1v1h-1zM256 463h1v1h-1zM261 463h1v1h-1zM266 463h1v1h-1zM272 463h1v1h-1zM249 464h1v1h-1zM255 464h1v1h-1zM260 464h1v1h-1zM265 464h1v1h-1zM271 464h1v1h-1zM254 465h1v1h-1zM259 465h1v1h-1zM264 465h1v1h-1zM270 465h1v1h-1zM253 466h1v1h-1zM258 466h1v1h-1zM263 466h1v1h-1zM269 466h1v1h-1zM252 467h1v1h-1zM257 467h1v1h-1zM262 467h1v1h-1zM268 467h1v1h-1zM256 468h1v1h-1zM261 468h1v1h-1zM267 468h1v1h-1zM255 469h1v1h-1zM260 469h1v1h-1zM266 469h1v1h-1z" fill="#00ffff" stroke="none"/>
<path d="M268.5 432.74A19.8 19.8 0 1 1 255.5 432.46" stroke="#ffffff" fill="none"/>
<path d="M255.5 432.5L255.5 443.5L268.5 443.5L268.5 432.5" stroke="#ffffff" fill="none"/>
<path d="M255.5 409V433" stroke="#00ff00"/>
<path d="M268.5 409V433" stroke="#00ff00"/>
<path d="M249 410.5H286" stroke="#00ff00"/>
<path d="M223.5 426V450" stroke="#00ff00"/>
<path d="M222 432.5H256" stroke="#00ff00"/>
<path d="M219 443.5H256" stroke="#00ff00"/>
<path d="M241.5 452V483" stroke="#00ff00"/>
<path d="M281.5 452V483" stroke="#00ff00"/>
<path d="M241 481.5H282" stroke="#00ff00"/>
<path d="M238 451.5H286" stroke="#ff0000" stroke-dasharray="20 2 3 2"/>
<path d="M261.5 428V472" stroke="#ff0000" stroke-dasharray="9 2 3 2"/>
<path d="M255.5 419.5L248.5 415.5L248.5 423.5L255.5 419.5" stroke="#00ff00" fill="none"/>
<path d="M255.5 419.5L242.5 412.5" stroke="#00ff00"/>
<path d="M268.5 419.5L275.5 415.5L275.5 423.5L268.5 419.5" stroke="#00ff00" fill="none"/>
<path d="M268.5 419.5L282.5 427.5" stroke="#00ff00"/>
<text transform="translate(247 423) rotate(-90) scale(0.8 1)" font-size="5" fill="#00ff00" text-anchor="start" font-weight="bold">3.2</text>
<text transform="translate(280 423) rotate(-90) scale(0.8 1)" font-size="5" fill="#00ff00" text-anchor="start" font-weight="bold">3.2</text>
<text transform="translate(261.6 398) scale(0.8 1)" font-size="5.5" fill="#00ff00" text-anchor="middle" font-weight="bold">A-A</text>
<text transform="translate(272 409) scale(0.75 1)" font-size="4.5" fill="#00ff00" text-anchor="start" font-weight="bold">8-0.036</text>
<text transform="translate(221 444) rotate(-90) scale(0.75 1)" font-size="4.5" fill="#00ff00" text-anchor="start" font-weight="bold">30-0.2</text>
<text transform="translate(261.6 480) scale(0.8 1)" font-size="5" fill="#00ff00" text-anchor="middle" font-weight="bold">Ø35k6</text>
<text transform="translate(582.5 85.5) scale(0.75 1)" font-size="6.5" fill="#00ff00" text-anchor="start" font-weight="bold">其余</text>
<path d="M599.5 79.5L606.5 79.5L603.0 85.5L599.5 79.5" stroke="#00ff00" fill="none"/>
<path d="M603.0 85.5L611.0 72.5" stroke="#00ff00"/>
<text transform="translate(597 78) scale(0.8 1)" font-size="5.5" fill="#00ff00" text-anchor="start" font-weight="bold">12.5</text>
<text transform="translate(436 424) scale(0.82 1)" font-size="11.5" fill="#00ff00" text-anchor="start" font-weight="bold">技术要求</text>
<text transform="translate(420 440.2) scale(0.8 1)" font-size="8" fill="#00ff00" text-anchor="start" font-weight="bold">1.去除尖角，毛刺。</text>
<text transform="translate(420 453.7) scale(0.8 1)" font-size="8" fill="#00ff00" text-anchor="start" font-weight="bold">2.齿形修正。</text>
<text transform="translate(420 466.2) scale(0.8 1)" font-size="8" fill="#00ff00" text-anchor="start" font-weight="bold">3.硬度HRC不小于35。</text>
<text transform="translate(420 479.7) scale(0.8 1)" font-size="8" fill="#00ff00" text-anchor="start" font-weight="bold">4.未注圆角R2。</text>
<text transform="translate(420 493.7) scale(0.8 1)" font-size="8" fill="#00ff00" text-anchor="start" font-weight="bold">5.未注倒角均为1×45°。</text>
<path d="M567 460.5H667" stroke="#ffffff"/>
<path d="M567 469.5H667" stroke="#ffffff"/>
<path d="M567 478.5H667" stroke="#ffffff"/>
<path d="M567 487.5H667" stroke="#ffffff"/>
<path d="M567 495.5H667" stroke="#ffffff"/>
<path d="M567 504.5H667" stroke="#ffffff"/>
<path d="M567 513.5H667" stroke="#ffffff"/>
<path d="M567 522.5H667" stroke="#ffffff"/>
<path d="M567.5 460V531" stroke="#ffffff"/>
<path d="M666 460.5H792" stroke="#ffffff"/>
<path d="M579.5 460V496" stroke="#ffffff"/>
<path d="M592.5 460V496" stroke="#ffffff"/>
<path d="M612.5 460V496" stroke="#ffffff"/>
<path d="M582.5 495V531" stroke="#ffffff"/>
<path d="M597.5 495V531" stroke="#ffffff"/>
<path d="M617.5 495V531" stroke="#ffffff"/>
<path d="M632.5 460V531" stroke="#ffffff"/>
<path d="M647.5 460V531" stroke="#ffffff"/>
<path d="M666.5 460V531" stroke="#ffffff"/>
<path d="M729.5 460V531" stroke="#ffffff"/>
<path d="M666 495.5H730" stroke="#ffffff"/>
<path d="M666 509.5H730" stroke="#ffffff"/>
<path d="M666 519.5H730" stroke="#ffffff"/>
<path d="M699.5 495V520" stroke="#ffffff"/>
<path d="M714.5 495V520" stroke="#ffffff"/>
<path d="M675.5 509V520" stroke="#ffffff"/>
<path d="M683.5 509V520" stroke="#ffffff"/>
<path d="M691.5 509V520" stroke="#ffffff"/>
<path d="M729 482.5H792" stroke="#ffffff"/>
<path d="M729 504.5H792" stroke="#ffffff"/>
<path d="M729 519.5H792" stroke="#ffffff"/>
<text transform="translate(573 493.5) scale(0.75 1)" font-size="5.6" fill="#00ff00" text-anchor="middle" font-weight="bold">标记</text>
<text transform="translate(585.5 493.5) scale(0.75 1)" font-size="5.6" fill="#00ff00" text-anchor="middle" font-weight="bold">处数</text>
<text transform="translate(602 493.5) scale(0.75 1)" font-size="5.6" fill="#00ff00" text-anchor="middle" font-weight="bold">分区</text>
<text transform="translate(622 493.5) scale(0.62 1)" font-size="5.6" fill="#00ff00" text-anchor="middle" font-weight="bold">更改文件号</text>
<text transform="translate(639.5 493.5) scale(0.75 1)" font-size="5.6" fill="#00ff00" text-anchor="middle" font-weight="bold">签名</text>
<text transform="translate(656.5 493.5) scale(0.62 1)" font-size="5.6" fill="#00ff00" text-anchor="middle" font-weight="bold">年、月、日</text>
<text transform="translate(574.5 502.5) scale(0.75 1)" font-size="5.6" fill="#00ff00" text-anchor="middle" font-weight="bold">设计</text>
<text transform="translate(624.5 502.5) scale(0.7 1)" font-size="5.6" fill="#00ff00" text-anchor="middle" font-weight="bold">标准化</text>
<text transform="translate(574.5 520.5) scale(0.75 1)" font-size="5.6" fill="#00ff00" text-anchor="middle" font-weight="bold">审核</text>
<text transform="translate(574.5 529) scale(0.75 1)" font-size="5.6" fill="#00ff00" text-anchor="middle" font-weight="bold">工艺</text>
<text transform="translate(624.5 529) scale(0.75 1)" font-size="5.6" fill="#00ff00" text-anchor="middle" font-weight="bold">批准</text>
<text transform="translate(698 480.8) scale(0.75 1)" font-size="7" fill="#00ff00" text-anchor="middle" font-weight="bold">20CrMnTi</text>
<text transform="translate(682.5 505) scale(0.72 1)" font-size="6" fill="#00ff00" text-anchor="middle" font-weight="bold">阶段标记</text>
<text transform="translate(706.5 505) scale(0.72 1)" font-size="6" fill="#00ff00" text-anchor="middle" font-weight="bold">重量</text>
<text transform="translate(721.5 505) scale(0.72 1)" font-size="6" fill="#00ff00" text-anchor="middle" font-weight="bold">比例</text>
<text transform="translate(721.5 517) scale(0.75 1)" font-size="6" fill="#00ff00" text-anchor="middle" font-weight="bold">1:1</text>
<text transform="translate(673 528) scale(0.75 1)" font-size="6" fill="#00ff00" text-anchor="middle" font-weight="bold">共</text>
<text transform="translate(681.5 528) scale(0.75 1)" font-size="6" fill="#00ff00" text-anchor="middle" font-weight="bold">1</text>
<text transform="translate(690 528) scale(0.75 1)" font-size="6" fill="#00ff00" text-anchor="middle" font-weight="bold">张</text>
<text transform="translate(706.5 528) scale(0.75 1)" font-size="6" fill="#00ff00" text-anchor="middle" font-weight="bold">第</text>
<text transform="translate(715 528) scale(0.75 1)" font-size="6" fill="#00ff00" text-anchor="middle" font-weight="bold">1</text>
<text transform="translate(723 528) scale(0.75 1)" font-size="6" fill="#00ff00" text-anchor="middle" font-weight="bold">张</text>
<text transform="translate(760.5 497.5) scale(0.46 1)" font-size="9" fill="#00ff00" text-anchor="middle" font-weight="bold">汽车驱动桥主减速器齿轮轴设计</text>
<text transform="translate(760.5 515.5) scale(0.75 1)" font-size="7" fill="#00ff00" text-anchor="middle" font-weight="bold">L9</text>
<text transform="translate(167.5 193.5) scale(0.8 1)" font-size="5.5" fill="#00ff00" text-anchor="middle" font-weight="bold">r</text>
<text transform="translate(179.0 193.5) scale(0.72 1)" font-size="5.5" fill="#00ff00" text-anchor="middle" font-weight="bold">0.008</text>
<text transform="translate(191.0 193.5) scale(0.8 1)" font-size="5.5" fill="#00ff00" text-anchor="middle" font-weight="bold">A</text>
<text transform="translate(381.0 150.5) scale(0.8 1)" font-size="5.5" fill="#00ff00" text-anchor="middle" font-weight="bold">b</text>
<text transform="translate(393.5 150.5) scale(0.72 1)" font-size="5.5" fill="#00ff00" text-anchor="middle" font-weight="bold">0.015</text>
<text transform="translate(405.5 150.5) scale(0.8 1)" font-size="5.5" fill="#00ff00" text-anchor="middle" font-weight="bold">B</text>
<text transform="translate(545.0 169) scale(0.8 1)" font-size="5.5" fill="#00ff00" text-anchor="middle" font-weight="bold">b</text>
<text transform="translate(557.0 169) scale(0.72 1)" font-size="5.5" fill="#00ff00" text-anchor="middle" font-weight="bold">0.015</text>
<text transform="translate(569.0 169) scale(0.8 1)" font-size="5.5" fill="#00ff00" text-anchor="middle" font-weight="bold">B</text>
<text transform="translate(543.0 188) scale(0.8 1)" font-size="5.5" fill="#00ff00" text-anchor="middle" font-weight="bold">r</text>
<text transform="translate(555.0 188) scale(0.72 1)" font-size="5.5" fill="#00ff00" text-anchor="middle" font-weight="bold">0.006</text>
<text transform="translate(567.0 188) scale(0.8 1)" font-size="5.5" fill="#00ff00" text-anchor="middle" font-weight="bold">A</text>
<text transform="translate(186 268.5) scale(0.8 1)" font-size="5.5" fill="#00ff00" text-anchor="middle" font-weight="bold">A</text>
<text transform="translate(567 269) scale(0.8 1)" font-size="5.5" fill="#00ff00" text-anchor="middle" font-weight="bold">B</text>
<text transform="translate(257 176.5) scale(0.8 1)" font-size="5.5" fill="#00ff00" text-anchor="middle" font-weight="bold">A</text>
<text transform="translate(257 273) scale(0.8 1)" font-size="5.5" fill="#00ff00" text-anchor="middle" font-weight="bold">A</text>
<text transform="translate(219 199) scale(0.8 1)" font-size="5" fill="#00ff00" text-anchor="middle" font-weight="bold">I</text>
<text transform="translate(451 175) scale(0.72 1)" font-size="6" fill="#00ff00" text-anchor="start" font-weight="bold">齿轮1</text>
<text transform="translate(496 188.5) scale(0.72 1)" font-size="6.5" fill="#00ff00" text-anchor="start" font-weight="bold">花键2</text>
<text transform="translate(193 231) rotate(-90) scale(0.75 1)" font-size="5.5" fill="#00ff00" text-anchor="middle" font-weight="bold">Ø25k6</text>
<text transform="translate(189 230) rotate(-90) scale(0.55 1)" font-size="3.6" fill="#00ff00" text-anchor="middle" font-weight="bold">+0.018 +0.002</text>
<path d="M195 232L189.5 232L195 238.5Z" fill="#00ff00" stroke="none" style="shape-rendering:auto"/>
<text transform="translate(245 229) rotate(-90) scale(0.75 1)" font-size="5.5" fill="#00ff00" text-anchor="middle" font-weight="bold">Ø30h6</text>
<text transform="translate(241 228) rotate(-90) scale(0.55 1)" font-size="3.6" fill="#00ff00" text-anchor="middle" font-weight="bold">0 -0.013</text>
<path d="M247 230L241.5 230L247 236.5Z" fill="#00ff00" stroke="none" style="shape-rendering:auto"/>
<text transform="translate(317 231) rotate(-90) scale(0.75 1)" font-size="5.5" fill="#00ff00" text-anchor="middle" font-weight="bold">Ø35k6</text>
<text transform="translate(313 230) rotate(-90) scale(0.55 1)" font-size="3.6" fill="#00ff00" text-anchor="middle" font-weight="bold">+0.018 +0.002</text>
<path d="M319 232L313.5 232L319 238.5Z" fill="#00ff00" stroke="none" style="shape-rendering:auto"/>
<text transform="translate(370 232) rotate(-90) scale(0.8 1)" font-size="5" fill="#00ff00" text-anchor="middle" font-weight="bold">35</text>
<text transform="translate(405 232) rotate(-90) scale(0.75 1)" font-size="5.5" fill="#00ff00" text-anchor="middle" font-weight="bold">Ø40k6</text>
<text transform="translate(401 231) rotate(-90) scale(0.55 1)" font-size="3.6" fill="#00ff00" text-anchor="middle" font-weight="bold">+0.018 +0.002</text>
<path d="M407 233L401.5 233L407 239.5Z" fill="#00ff00" stroke="none" style="shape-rendering:auto"/>
<text transform="translate(475 233) rotate(-90) scale(0.75 1)" font-size="5.5" fill="#00ff00" text-anchor="middle" font-weight="bold">Ø30h6</text>
<text transform="translate(471 232) rotate(-90) scale(0.55 1)" font-size="3.6" fill="#00ff00" text-anchor="middle" font-weight="bold">0 -0.013</text>
<path d="M477 234L471.5 234L477 240.5Z" fill="#00ff00" stroke="none" style="shape-rendering:auto"/>
<text transform="translate(568 233) rotate(-90) scale(0.75 1)" font-size="5.5" fill="#00ff00" text-anchor="middle" font-weight="bold">Ø25k6</text>
<text transform="translate(564 232) rotate(-90) scale(0.55 1)" font-size="3.6" fill="#00ff00" text-anchor="middle" font-weight="bold">+0.018 +0.002</text>
<path d="M570 234L564.5 234L570 240.5Z" fill="#00ff00" stroke="none" style="shape-rendering:auto"/>
<path d="M234 229.5L229 232.5L234 235.5Z" fill="#00ff00" stroke="none" style="shape-rendering:auto"/>
<path d="M292 229.5L287 232.5L292 235.5Z" fill="#00ff00" stroke="none" style="shape-rendering:auto"/>
<path d="M533 229.5L528 232.5L533 235.5Z" fill="#00ff00" stroke="none" style="shape-rendering:auto"/>
<text transform="translate(341.5 271) scale(0.8 1)" font-size="4.5" fill="#00ff00" text-anchor="middle" font-weight="bold">75</text>
<text transform="translate(402.5 271.5) scale(0.8 1)" font-size="5" fill="#00ff00" text-anchor="middle" font-weight="bold">40</text>
<text transform="translate(261.5 286) scale(0.8 1)" font-size="4.5" fill="#00ff00" text-anchor="middle" font-weight="bold">75</text>
<text transform="translate(362.5 286) scale(0.8 1)" font-size="4.5" fill="#00ff00" text-anchor="middle" font-weight="bold">115</text>
<text transform="translate(229.5 295) scale(0.8 1)" font-size="4.5" fill="#00ff00" text-anchor="middle" font-weight="bold">0.5</text>
<text transform="translate(209 308) scale(0.8 1)" font-size="4.5" fill="#00ff00" text-anchor="middle" font-weight="bold">15</text>
<text transform="translate(319.5 308) scale(0.8 1)" font-size="5" fill="#00ff00" text-anchor="middle" font-weight="bold">300</text>
<text transform="translate(433 308) scale(0.8 1)" font-size="4.5" fill="#00ff00" text-anchor="middle" font-weight="bold">23</text>
<text transform="translate(474 308) scale(0.8 1)" font-size="4.5" fill="#00ff00" text-anchor="middle" font-weight="bold">59</text>
<text transform="translate(515.5 308) scale(0.8 1)" font-size="4.5" fill="#00ff00" text-anchor="middle" font-weight="bold">24</text>
<text transform="translate(311.5 333) scale(0.8 1)" font-size="5" fill="#00ff00" text-anchor="middle" font-weight="bold">220</text>
<text transform="translate(375 370) scale(0.8 1)" font-size="5" fill="#00ff00" text-anchor="middle" font-weight="bold">348</text>
<text transform="translate(541.5 271) scale(0.8 1)" font-size="4.5" fill="#00ff00" text-anchor="middle" font-weight="bold">15</text>
<text transform="translate(433 282) scale(0.8 1)" font-size="5" fill="#00ff00" text-anchor="middle" font-weight="bold">·</text>
</svg>
</body></html>
